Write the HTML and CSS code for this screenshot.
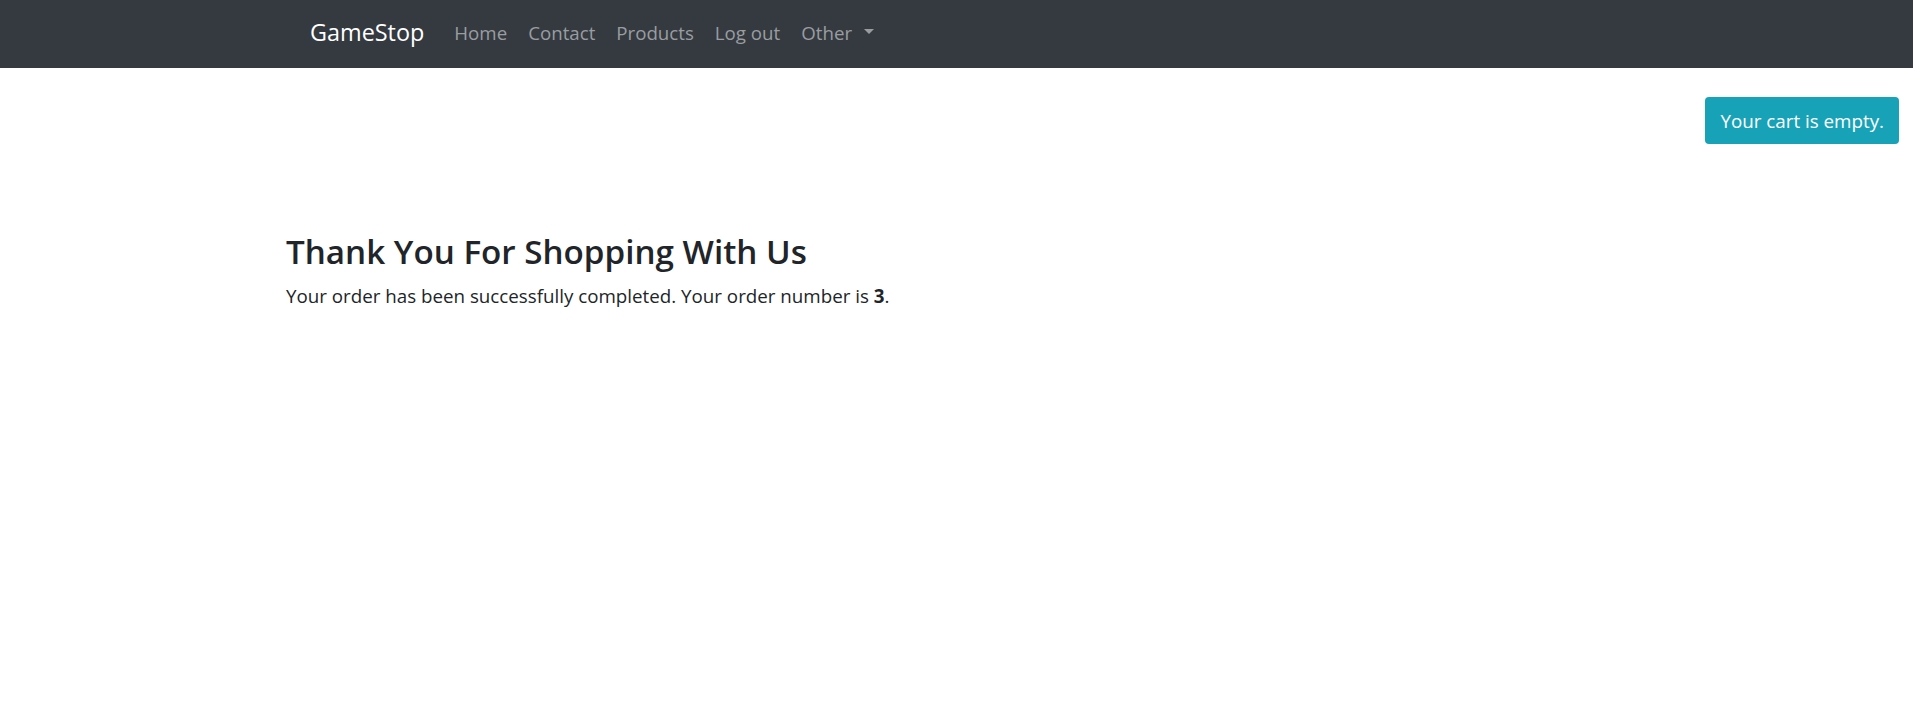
FILE: index.html
```html
<!DOCTYPE html>
<html lang="en">
<head>
<meta charset="utf-8">
<title>GameStop - Thank You</title>
<link rel="stylesheet" href="styles.css">
</head>
<body>
<nav class="navbar">
  <div class="nav-inner">
    <a class="brand" href="#">GameStop</a>
    <ul class="nav-list">
      <li><a class="nav-link" href="#">Home</a></li>
      <li><a class="nav-link" href="#">Contact</a></li>
      <li><a class="nav-link" href="#">Products</a></li>
      <li><a class="nav-link" href="#">Log out</a></li>
      <li><a class="nav-link dropdown" href="#">Other<span class="caret"></span></a></li>
    </ul>
  </div>
</nav>
<div class="cart-row">
  <a class="cart-btn" href="#">Your cart is empty.</a>
</div>
<main class="content">
  <h2 class="title">Thank You For Shopping With Us</h2>
  <p class="message">Your order has been successfully completed. Your order number is <strong>3</strong>.</p>
</main>
</body>
</html>
```
FILE: styles.css
```css
* { box-sizing: border-box; }
html, body { margin: 0; padding: 0; }
body {
  font-family: "Open Sans", "Noto Sans", sans-serif;
  color: #212529;
  background: #fff;
  font-size: 18.6px;
}
.navbar {
  background: #343a40;
  height: 68px;
  display: flex;
  align-items: center;
}
.nav-inner {
  display: flex;
  align-items: center;
  padding-left: 310px;
  padding-bottom: 1px;
}
.brand {
  color: #fff;
  text-decoration: none;
  font-size: 23.4px;
  margin-right: 19.5px;
  line-height: 1;
  padding-bottom: 1px;
}
.nav-list {
  list-style: none;
  margin: 0;
  padding: 0;
  display: flex;
  align-items: center;
}
.nav-link {
  display: flex;
  align-items: center;
  color: #9a9da0;
  text-decoration: none;
  padding: 0 10.5px;
  font-size: 18.7px;
  line-height: 1;
}
.caret {
  display: inline-block;
  margin-left: 12px;
  margin-top: -3.4px;
  width: 0;
  height: 0;
  border-left: 5.6px solid transparent;
  border-right: 5.6px solid transparent;
  border-top: 5.6px solid #9a9da0;
}
.cart-row {
  display: flex;
  justify-content: flex-end;
  padding: 29px 14px 0 0;
}
.cart-btn {
  display: inline-flex;
  align-items: center;
  height: 47px;
  padding: 0 15px;
  background: #17a2b8;
  color: #fff;
  text-decoration: none;
  border-radius: 4px;
  font-size: 18.8px;
}
.content {
  padding-left: 286px;
  margin-top: 88px;
}
.title {
  margin: 0 0 10.5px;
  font-size: 33.2px;
  font-weight: 600;
  line-height: 1.2;
}
.message {
  margin: 0;
  font-size: 18.75px;
  line-height: 1.5;
}
.message strong { font-weight: 700; }
```
